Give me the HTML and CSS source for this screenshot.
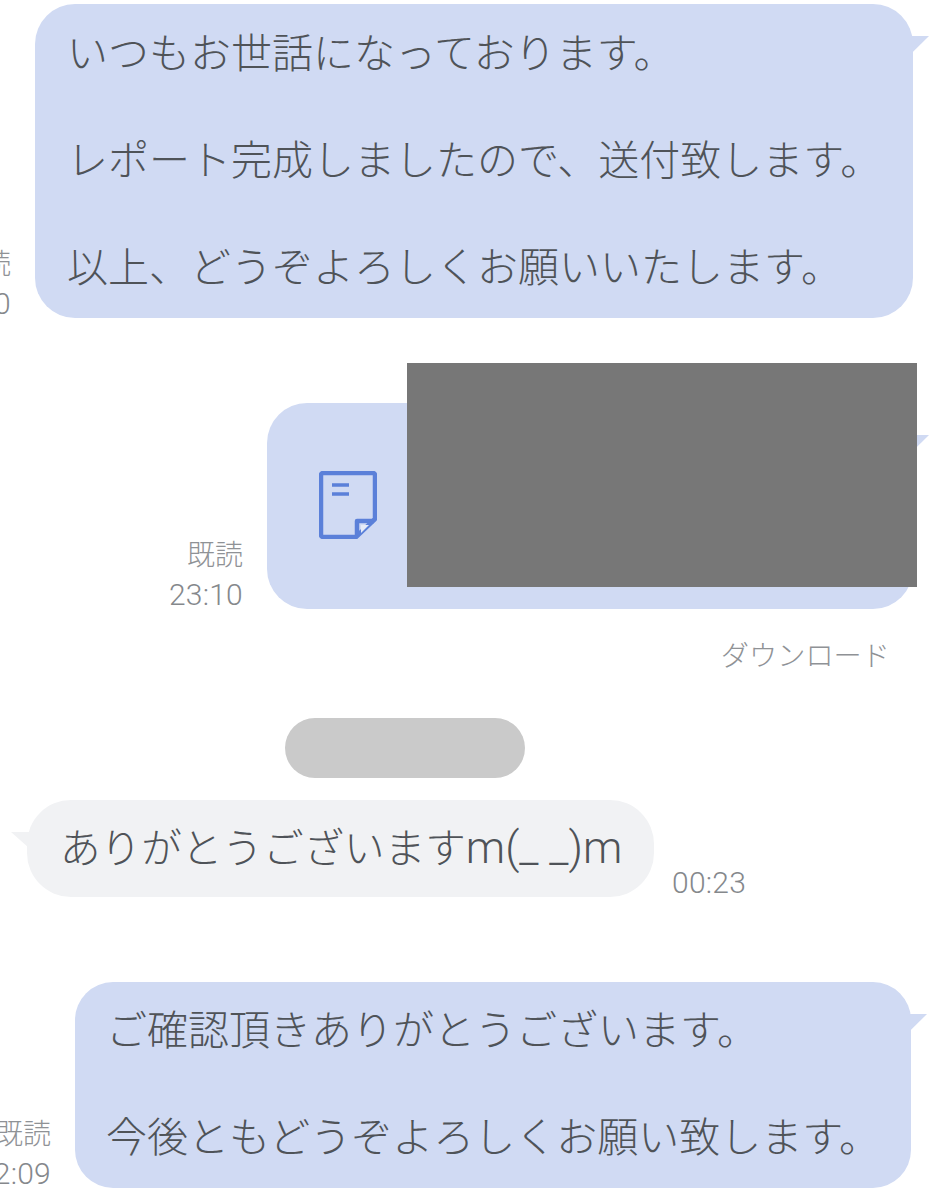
FILE: index.html
```html
<!DOCTYPE html>
<html lang="ja">
<head>
<meta charset="utf-8">
<title>トーク</title>
<link rel="stylesheet" href="styles.css">
</head>
<body>
<main class="chat">
  <div class="row row-out row-first">
    <div class="meta"><span>既読</span><span class="time">23:10</span></div>
    <div class="bubble bubble-out bubble-long">いつもお世話になっております。<br><br>レポート完成しましたので、送付致します。<br><br>以上、どうぞよろしくお願いいたします。</div>
  </div>

  <div class="row row-out row-file">
    <div class="meta"><span>既読</span><span class="time">23:10</span></div>
    <div class="bubble bubble-out bubble-file">
      <svg class="file-icon" viewBox="0 0 58 68" width="58" height="68" aria-hidden="true">
        <path class="file-line" d="M2 4a2 2 0 0 1 2-2h50a2 2 0 0 1 2 2v44L37 66H4a2 2 0 0 1-2-2z"/>
        <path class="file-line" d="M38 65V50h17"/>
        <path class="file-fill" d="M42 54h8l-8 8z"/>
        <path class="file-line thin" d="M13 14h17M13 23h17"/>
      </svg>
      <div class="redaction"></div>
    </div>
  </div>
  <div class="download">ダウンロード</div>

  <div class="name-pill"></div>

  <div class="row row-in">
    <div class="bubble bubble-in">ありがとうございます<span class="emote">m(_ _)m</span></div>
    <div class="meta"><span class="time">00:23</span></div>
  </div>

  <div class="row row-out row-last">
    <div class="meta"><span>既読</span><span class="time">22:09</span></div>
    <div class="bubble bubble-out bubble-short">ご確認頂きありがとうございます。<br><br>今後ともどうぞよろしくお願い致します。</div>
  </div>
</main>
</body>
</html>
```
FILE: styles.css
```css
* { box-sizing: border-box; }
html, body { margin: 0; background: #fff; }
.chat {
  width: 934px;
  height: 1200px;
  overflow: hidden;
  padding-top: 4px;
  font-family: Roboto, "Noto Sans CJK JP", sans-serif;
}
.row { display: flex; }
.row-out { justify-content: flex-end; gap: 24px; }
.row-in { gap: 18px; padding-left: 27px; margin-top: 22px; }
.row-first { padding-right: 21px; }
.row-file { padding-right: 21px; margin-top: 85px; }
.row-last { padding-right: 23px; margin-top: 85px; }
.bubble {
  position: relative;
  flex: none;
  color: #4f5358;
  font-size: 41px;
  line-height: 53.6px;
  font-weight: 300;
  white-space: nowrap;
}
.bubble::after {
  content: "";
  position: absolute;
  width: 18px;
  height: 16px;
}
.bubble-out { background: #d0daf3; }
.bubble-out::after {
  top: 32px;
  left: 100%;
  margin-left: -2px;
  background: #d0daf3;
  clip-path: polygon(0 0, 100% 0, 10% 100%);
}
.bubble-in {
  width: 627px;
  height: 97px;
  padding: 22px 0 0 33px;
  border-radius: 44px;
  background: #f1f2f4;
  font-size: 40.6px;
}
.bubble-in::after {
  top: 32px;
  right: 100%;
  margin-right: -2px;
  background: #f1f2f4;
  clip-path: polygon(0 0, 100% 0, 100% 100%);
}
.emote { font-size: 44.4px; }
.bubble-long {
  width: 878px;
  height: 314px;
  padding: 24px 0 0 32px;
  border-radius: 40px;
}
.bubble-file {
  display: flex;
  align-items: center;
  width: 646px;
  height: 206px;
  padding-left: 52px;
  border-radius: 40px;
}
.bubble-short {
  width: 836px;
  height: 206px;
  padding: 23px 0 0 31px;
  border-radius: 38px;
}
.file-icon { flex: none; margin-top: -3px; }
.file-line {
  fill: none;
  stroke: #5b80d9;
  stroke-width: 4.5;
  stroke-linejoin: round;
}
.file-line.thin { stroke-width: 3.5; }
.file-fill { fill: #e6ebf8; }
.redaction {
  position: absolute;
  z-index: 1;
  left: 140px;
  top: -40px;
  width: 510px;
  height: 224px;
  background: #777;
}
.meta {
  display: flex;
  flex: none;
  flex-direction: column;
  align-items: flex-end;
  align-self: flex-end;
  margin-bottom: -5px;
  color: #8f9296;
  font-size: 28px;
  line-height: 39px;
  font-weight: 300;
}
.time { font-size: 30px; font-weight: 300; color: #85888c; letter-spacing: 0.25px; }
.download {
  margin: 32px 44px 0 0;
  color: #8f9296;
  font-size: 28.2px;
  line-height: 32px;
  font-weight: 300;
  text-align: right;
}
.name-pill {
  width: 240px;
  height: 60px;
  margin: 45px 0 0 285px;
  border-radius: 30px;
  background: #cacaca;
}
```
